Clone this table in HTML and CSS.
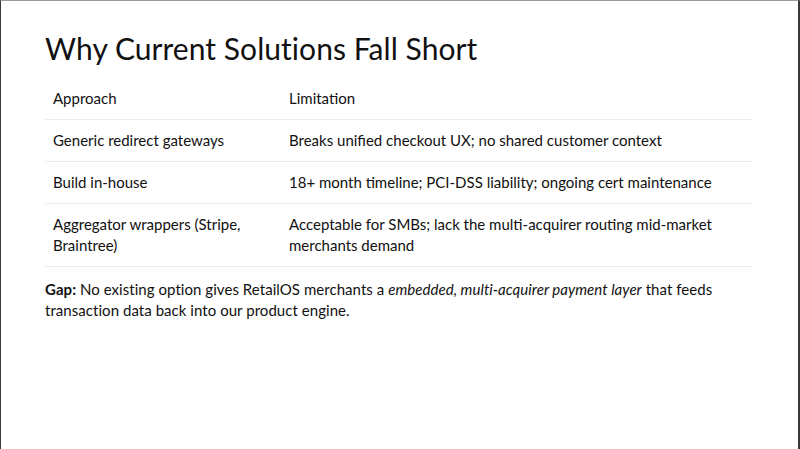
FILE: index.html
```html
<!DOCTYPE html>
<html>
<head>
<meta charset="utf-8">
<link rel="stylesheet" href="styles.css">
</head>
<body>
<div class="slide">
  <h1 class="title">Why Current Solutions Fall Short</h1>
  <table class="grid">
    <thead>
      <tr><th class="c1">Approach</th><th>Limitation</th></tr>
    </thead>
    <tbody>
      <tr><td class="c1">Generic redirect gateways</td><td>Breaks unified checkout UX; no shared customer context</td></tr>
      <tr><td class="c1">Build in-house</td><td>18+ month timeline; PCI-DSS liability; ongoing cert maintenance</td></tr>
      <tr><td class="c1">Aggregator wrappers (Stripe, Braintree)</td><td>Acceptable for SMBs; lack the multi-acquirer routing mid-market merchants demand</td></tr>
    </tbody>
  </table>
  <p class="gap"><strong>Gap:</strong> No existing option gives RetailOS merchants a <em>embedded, multi-acquirer payment layer</em> that feeds transaction data back into our product engine.</p>
</div>
</body>
</html>
```
FILE: styles.css
```css
html, body {
  margin: 0;
  padding: 0;
  background: #fff;
}
body {
  width: 800px;
  height: 449px;
  overflow: hidden;
}
.slide {
  box-sizing: border-box;
  width: 800px;
  height: 449px;
  border-top: 1px solid #9a9a9a;
  border-left: 1px solid #3a3a3a;
  border-right: 2px solid #3a3a3a;
  padding: 20px 46px 0 44px;
  font-family: Lato, "Noto Sans", sans-serif;
  color: #111;
}
.title {
  margin: 0;
  font-size: 30px;
  font-weight: 400;
  line-height: 54px;
  letter-spacing: 0.05px;
}
.grid {
  width: 708px;
  border-collapse: collapse;
  margin-top: 3px;
  font-size: 15px;
}
.grid th, .grid td {
  text-align: left;
  font-weight: 400;
  padding: 10px 8px 10px 8px;
  line-height: 21px;
  border-bottom: 1px solid #ececec;
  vertical-align: top;
}
.grid .c1 {
  width: 220px;
}
.gap {
  margin: 12px 0 0 0;
  font-size: 15px;
  line-height: 21px;
  letter-spacing: 0.05px;
}
```
